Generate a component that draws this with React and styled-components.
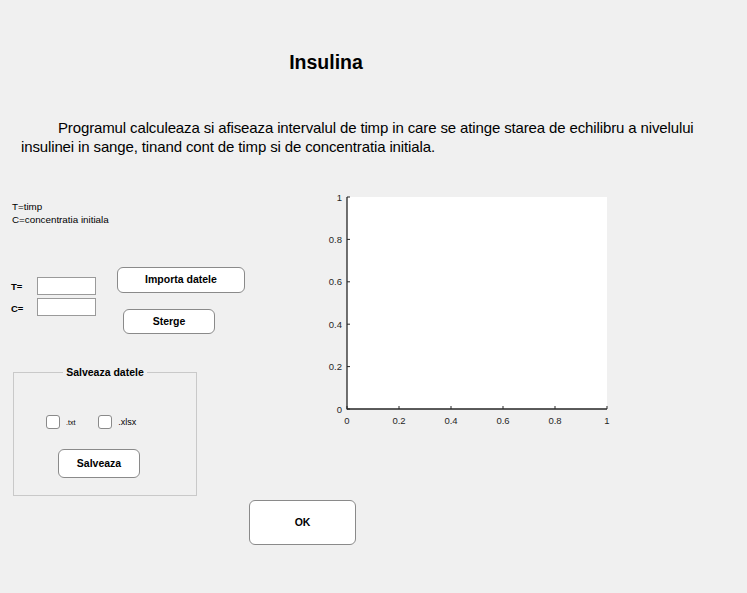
import React from "react";
import styled, { createGlobalStyle } from "styled-components";

const Global = createGlobalStyle`
  html, body { margin: 0; padding: 0; background: #f0f0f0; }
  body { font-family: "Liberation Sans", Arial, Helvetica, sans-serif; color: #000; }
  * { box-sizing: border-box; }
`;

const Page = styled.div`
  width: 747px;
  height: 593px;
  background: #f0f0f0;
  display: flex;
  flex-direction: column;
  overflow: hidden;
`;

const Title = styled.h1`
  margin: 50px 0 0 0;
  width: 652px;
  text-align: center;
  font-size: 19.5px;
  line-height: 24px;
  font-weight: bold;
`;

const Description = styled.p`
  margin: 44px 0 0 21px;
  width: 690px;
  font-size: 15px;
  line-height: 19px;
  letter-spacing: -0.13px;
  text-indent: 37px;
`;

const Body = styled.div`
  display: flex;
  margin-top: 36px;
`;

const LeftColumn = styled.div`
  width: 320px;
  display: flex;
  flex-direction: column;
`;

const Legend = styled.div`
  margin: 8px 0 0 12px;
  font-size: 9.8px;
  line-height: 13px;
`;

const ControlsRow = styled.div`
  display: flex;
  align-items: flex-start;
  margin-top: 41px;
`;

const Fields = styled.div`
  display: grid;
  grid-template-columns: 26px 59px;
  row-gap: 3px;
  margin: 10px 0 0 11px;
  align-items: center;
`;

const FieldLabel = styled.label`
  font-size: 9.5px;
  font-weight: bold;
  padding-top: ${(p) => p.$pt || 0}px;
`;

const TextInput = styled.input`
  width: 59px;
  height: 18px;
  margin: 0;
  padding: 0 2px;
  border: 1px solid #9a9a9a;
  background: #fff;
  font-size: 9px;
  outline: none;
`;

const Buttons = styled.div`
  display: flex;
  flex-direction: column;
  align-items: flex-start;
  margin-left: 21px;
`;

const Button = styled.button`
  width: ${(p) => p.$w}px;
  height: ${(p) => p.$h}px;
  margin: ${(p) => p.$m || "0"};
  padding: 0;
  background: #fff;
  border: 1px solid #8a8a8a;
  border-radius: ${(p) => p.$r || 6}px;
  font-family: "Liberation Sans", Arial, sans-serif;
  font-size: 10.5px;
  font-weight: bold;
  color: #000;
  display: flex;
  align-items: center;
  justify-content: center;
  padding-bottom: 2px;
  align-self: ${(p) => p.$self || "auto"};
`;

const Panel = styled.fieldset`
  width: 184px;
  height: 130px;
  margin: 32px 0 0 13px;
  padding: 0;
  border: 1px solid #c9c9c9;
  display: flex;
  flex-direction: column;
  align-items: center;
`;

const PanelTitle = styled.legend`
  margin: 0 auto;
  padding: 0 3px;
  font-size: 10.5px;
  font-weight: bold;
  line-height: 12px;
`;

const CheckRow = styled.div`
  display: flex;
  align-items: center;
  align-self: flex-start;
  margin: 37px 0 0 32px;
`;

const CheckItem = styled.label`
  display: flex;
  align-items: center;
  margin-right: ${(p) => p.$gap || 0}px;
  font-size: ${(p) => p.$fs}px;
`;

const CheckBox = styled.span`
  display: inline-block;
  width: 14px;
  height: 14px;
  border: 1px solid #8a8a8a;
  border-radius: 3px;
  background: #fff;
  margin-right: ${(p) => p.$mr}px;
`;

const PlotColumn = styled.div`
  display: flex;
  align-items: flex-start;
`;

const Footer = styled.div`
  display: flex;
  margin-top: 4px;
  padding-left: 249px;
`;

function Axes() {
  const x0 = 27, y0 = 217, w = 260, h = 212;
  const ticks = [0, 0.2, 0.4, 0.6, 0.8, 1];
  const fmt = (t) => (t === 0 || t === 1 ? String(t) : t.toFixed(1));
  return (
    <svg width="300" height="240" viewBox="0 0 300 240" style={{ display: "block" }}>
      <rect x={x0} y={y0 - h} width={w} height={h} fill="#fff" />
      {ticks.map((t) => (
        <g key={"y" + t}>
          <line x1={x0} x2={x0 + 3} y1={y0 - t * h} y2={y0 - t * h} stroke="#262626" strokeWidth="1" />
          <text x={x0 - 5} y={y0 - t * h + 3.5} fontSize="9.5" textAnchor="end" fill="#262626" fontFamily="Liberation Sans, Arial, sans-serif">
            {fmt(t)}
          </text>
        </g>
      ))}
      {ticks.map((t) => (
        <g key={"x" + t}>
          <line x1={x0 + t * w} x2={x0 + t * w} y1={y0} y2={y0 - 3} stroke="#262626" strokeWidth="1" />
          <text x={x0 + t * w} y={y0 + 15} fontSize="9.5" textAnchor="middle" fill="#262626" fontFamily="Liberation Sans, Arial, sans-serif">
            {fmt(t)}
          </text>
        </g>
      ))}
      <line x1={x0} x2={x0} y1={y0 - h} y2={y0 + 0.5} stroke="#262626" strokeWidth="1.3" />
      <line x1={x0} x2={x0 + w} y1={y0} y2={y0} stroke="#262626" strokeWidth="1.3" />
    </svg>
  );
}

export default function App() {
  return (
    <Page>
      <Global />
      <Title>Insulina</Title>
      <Description>
        Programul calculeaza si afiseaza intervalul de timp in care se atinge starea de echilibru a nivelului
        insulinei in sange, tinand cont de timp si de concentratia initiala.
      </Description>
      <Body>
        <LeftColumn>
          <Legend>
            T=timp
            <br />
            C=concentratia initiala
          </Legend>
          <ControlsRow>
            <Fields>
              <FieldLabel>T=</FieldLabel>
              <TextInput />
              <FieldLabel $pt={2}>C=</FieldLabel>
              <TextInput />
            </Fields>
            <Buttons>
              <Button $w={128} $h={26}>Importa datele</Button>
              <Button $w={92} $h={25} $m="16px 0 0 6px">Sterge</Button>
            </Buttons>
          </ControlsRow>
          <Panel>
            <PanelTitle>Salveaza datele</PanelTitle>
            <CheckRow>
              <CheckItem $fs={7} $gap={23}>
                <CheckBox $mr={6} />
                .txt
              </CheckItem>
              <CheckItem $fs={9}>
                <CheckBox $mr={6} />
                .xlsx
              </CheckItem>
            </CheckRow>
            <Button $w={82} $h={29} $m="20px 0 0 44px" $self="flex-start">Salveaza</Button>
          </Panel>
        </LeftColumn>
        <PlotColumn>
          <Axes />
        </PlotColumn>
      </Body>
      <Footer>
        <Button $w={107} $h={45}>OK</Button>
      </Footer>
    </Page>
  );
}
